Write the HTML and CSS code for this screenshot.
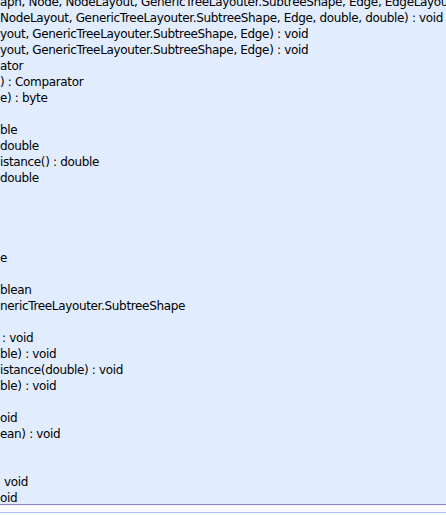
FILE: index.html
```html
<!DOCTYPE html>
<html>
<head>
<meta charset="utf-8">
<link rel="stylesheet" href="styles.css">
</head>
<body>
<div class="classbox">
  <div class="members">
    <div class="ln">aph, Node, NodeLayout, GenericTreeLayouter.SubtreeShape, Edge, EdgeLayout</div>
    <div class="ln">NodeLayout, GenericTreeLayouter.SubtreeShape, Edge, double, double) : void</div>
    <div class="ln">yout, GenericTreeLayouter.SubtreeShape, Edge) : void</div>
    <div class="ln">yout, GenericTreeLayouter.SubtreeShape, Edge) : void</div>
    <div class="ln">ator</div>
    <div class="ln">) : Comparator</div>
    <div class="ln">e) : byte</div>
    <div class="ln">&nbsp;</div>
    <div class="ln">ble</div>
    <div class="ln">double</div>
    <div class="ln">istance() : double</div>
    <div class="ln">double</div>
    <div class="ln">&nbsp;</div>
    <div class="ln">&nbsp;</div>
    <div class="ln">&nbsp;</div>
    <div class="ln">&nbsp;</div>
    <div class="ln">e</div>
    <div class="ln">&nbsp;</div>
    <div class="ln">blean</div>
    <div class="ln">nericTreeLayouter.SubtreeShape</div>
    <div class="ln">&nbsp;</div>
    <div class="ln shift-colon">: void</div>
    <div class="ln">ble) : void</div>
    <div class="ln">istance(double) : void</div>
    <div class="ln">ble) : void</div>
    <div class="ln">&nbsp;</div>
    <div class="ln">oid</div>
    <div class="ln">ean) : void</div>
    <div class="ln">&nbsp;</div>
    <div class="ln">&nbsp;</div>
    <div class="ln shift-void">void</div>
    <div class="ln">oid</div>
  </div>
</div>
<div class="gap"></div>
<div class="nextbox"></div>
</body>
</html>
```
FILE: styles.css
```css
html, body {
  margin: 0;
  padding: 0;
  background: #fafaff;
  overflow: hidden;
}
.classbox {
  height: 504px;
  background: #e1edff;
  border-bottom: 1px solid #8585c4;
  overflow: hidden;
}
.members {
  margin-top: -6px;
  font-family: "DejaVu Sans", sans-serif;
  font-size: 12px;
  line-height: 16px;
  letter-spacing: -0.34px;
  color: #000;
}
.ln {
  white-space: nowrap;
  height: 16px;
}
.shift-colon {
  padding-left: 2px;
}
.shift-void {
  padding-left: 4px;
}
.gap {
  height: 7px;
  background: #fafaff;
}
.nextbox {
  height: 3px;
  border-top: 1px solid #a8c0ff;
  background: #fafaff;
}
```
